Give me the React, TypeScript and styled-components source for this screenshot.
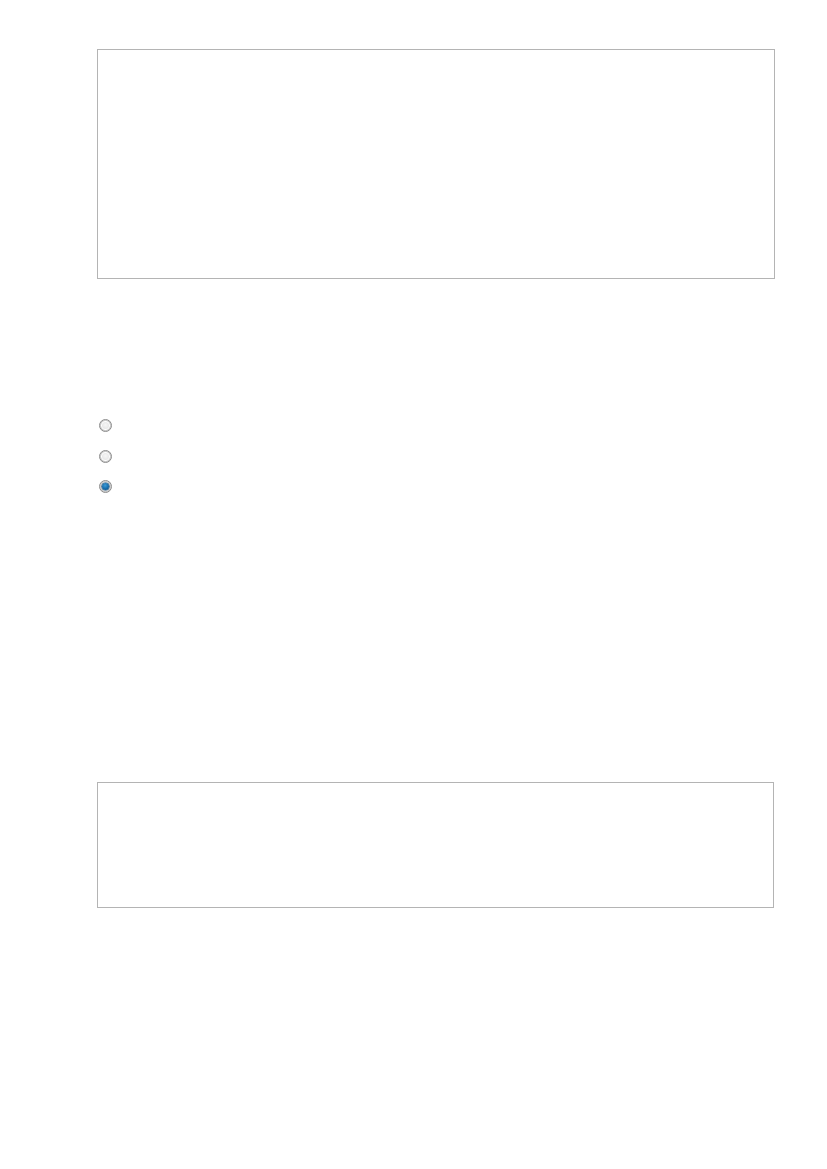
import React from "react";
import styled, { createGlobalStyle } from "styled-components";

const Global = createGlobalStyle`
  html, body { margin: 0; padding: 0; background: #ffffff; }
  body { font-family: "Liberation Sans", Arial, sans-serif; }
`;

const Page = styled.div`
  width: 827px;
  height: 1169px;
  box-sizing: border-box;
  padding: 49px 0 0 97px;
  display: flex;
  flex-direction: column;
`;

const Box = styled.div<{ $w: number; $h: number }>`
  width: ${(p) => p.$w}px;
  height: ${(p) => p.$h}px;
  box-sizing: border-box;
  border: 1px solid #b4b4b4;
  background: #ffffff;
`;

const RadioList = styled.div`
  margin-top: 140px;
  margin-left: 2px;
  display: flex;
  flex-direction: column;
  gap: 17.5px;
`;

const Radio = styled.span<{ $checked?: boolean }>`
  position: relative;
  display: block;
  width: 13px;
  height: 13px;
  box-sizing: border-box;
  border-radius: 50%;
  border: 1px solid #8c8c8c;
  background: radial-gradient(circle at 50% 45%, #f6f6f6 0%, #e6e6e6 50%, #bcbcbc 100%);
  box-shadow: inset 0 0 0 1px #c8c8c8, inset 0 0 0 2px #ffffff;
  &::after {
    content: "";
    display: ${(p) => (p.$checked ? "block" : "none")};
    position: absolute;
    left: 2px;
    top: 2px;
    width: 7px;
    height: 7px;
    border-radius: 50%;
    background: radial-gradient(circle at 45% 35%, #3d9ad6 0%, #1268a6 60%, #0a4678 100%);
    box-shadow: 0 0 0 0.6px #0a3a62;
  }
`;

const SecondBox = styled(Box)`
  margin-top: 289px;
`;

export default function App() {
  return (
    <>
      <Global />
      <Page>
        <Box $w={678} $h={230} />
        <RadioList>
          <Radio />
          <Radio />
          <Radio $checked />
        </RadioList>
        <SecondBox $w={677} $h={126} />
      </Page>
    </>
  );
}
